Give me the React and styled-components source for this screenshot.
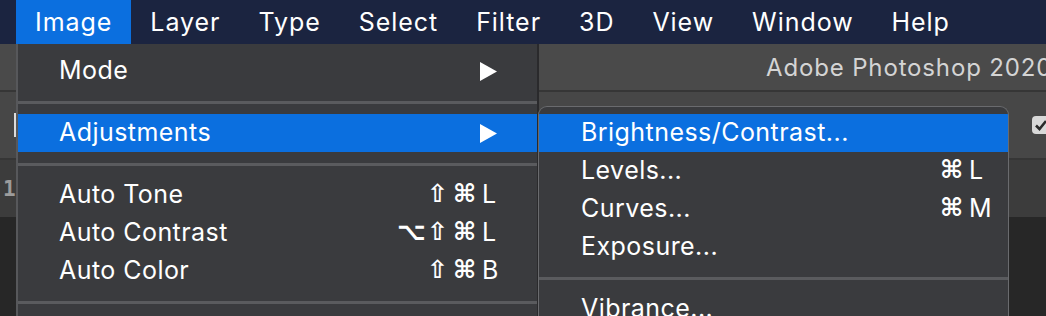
import * as React from 'react';
import styled, { createGlobalStyle } from 'styled-components';

const GlobalStyle = createGlobalStyle`
  html, body {
    margin: 0;
    padding: 0;
    background: #262626;
  }
  body {
    font-family: Inter, "DejaVu Sans", sans-serif;
    -webkit-font-smoothing: antialiased;
  }
`;

const Screen = styled.div`
  position: relative;
  width: 1046px;
  height: 316px;
  overflow: hidden;
  display: flex;
  flex-direction: column;
  background: #262626;
`;

const MenuBar = styled.nav`
  height: 44px;
  flex-shrink: 0;
  display: flex;
  align-items: stretch;
  padding-left: 16px;
  background: #1b2440;
`;

const MenuTitle = styled.div`
  display: flex;
  align-items: center;
  padding: 0 19px;
  font-size: 25px;
  letter-spacing: 0.95px;
  color: #ffffff;
  background: ${(p) => (p.$open ? '#0b6fdf' : 'transparent')};
`;

const TitleBar = styled.div`
  height: 46px;
  flex-shrink: 0;
  display: flex;
  align-items: center;
  padding-left: 766px;
  background: #4a4a4a;
  border-bottom: 2px solid #363636;
  color: #d4d4d4;
  font-size: 24px;
  letter-spacing: 0.85px;
  white-space: nowrap;
`;

const OptionsBar = styled.div`
  height: 66px;
  flex-shrink: 0;
  display: flex;
  align-items: center;
  justify-content: space-between;
  padding-left: 14px;
  background: #474747;
  border-bottom: 2px solid #363636;
`;

const Grip = styled.div`
  width: 2px;
  height: 24px;
  background: #dcdcdc;
`;

const Checkbox = styled.div`
  width: 18px;
  height: 18px;
  margin-right: -4px;
  border-radius: 4px;
  background: #d9d9d9;
  display: flex;
  align-items: center;
  justify-content: center;
`;

const InfoBar = styled.div`
  height: 57px;
  flex-shrink: 0;
  display: flex;
  align-items: center;
  padding-left: 3px;
  background: #3c3c3c;
  color: #9c9c9c;
  font-family: "DejaVu Sans Mono", monospace;
  font-weight: bold;
  font-size: 21px;
`;

const Canvas = styled.div`
  flex: 1;
  background: #272727;
`;

const Menu = styled.div`
  position: absolute;
  top: ${(p) => p.$top}px;
  left: ${(p) => p.$left}px;
  width: ${(p) => p.$width}px;
  bottom: -20px;
  padding-top: ${(p) => p.$padTop}px;
  box-sizing: border-box;
  background: #3a3b3e;
  border-left: ${(p) => (p.$sub ? '1px solid #6a6b6e' : '2px solid #57585b')};
  border-right: ${(p) => (p.$sub ? '1px solid #6a6b6e' : '2px solid #2a2a2c')};
  border-top: ${(p) => (p.$sub ? '1px solid #6a6b6e' : 'none')};
  border-radius: ${(p) => (p.$sub ? '9px 9px 0 0' : '0')};
  overflow: hidden;
`;

const Row = styled.div`
  height: 38px;
  display: flex;
  align-items: center;
  justify-content: space-between;
  padding: 0 ${(p) => p.$padRight}px 0 ${(p) => p.$padLeft}px;
  background: ${(p) => (p.$active ? '#0b6fdf' : 'transparent')};
  color: #ffffff;
  white-space: nowrap;
`;

const Label = styled.span`
  font-size: 25px;
  letter-spacing: 0.45px;
  margin-bottom: 3px;
`;

const Separator = styled.div`
  height: 24px;
  display: flex;
  align-items: center;
  &::after {
    content: '';
    flex: 1;
    height: 3px;
    background: #5a5b5e;
  }
`;

const Shortcut = styled.div`
  display: flex;
  align-items: center;
  margin-bottom: 3px;
`;

const SymbolKey = styled.span`
  width: 27px;
  text-align: center;
  font-family: "DejaVu Sans", sans-serif;
  font-size: 25px;
  font-weight: bold;
`;

const LetterKey = styled.span`
  width: 22px;
  margin-left: 4px;
  font-size: 25px;
`;

const Arrow = () => (
  <svg width="17" height="19" viewBox="0 0 17 19">
    <polygon points="0,0 17,9.5 0,19" fill="#ffffff" />
  </svg>
);

const Check = () => (
  <svg width="14" height="14" viewBox="0 0 14 14">
    <path d="M2 7.5 L5.5 11 L12 3" stroke="#2a2a2a" strokeWidth="2.6" fill="none" />
  </svg>
);

const Keys = ({ keys }) => (
  <Shortcut>
    {keys.map((k, i) =>
      '⇧⌘⌥'.includes(k) ? <SymbolKey key={i}>{k}</SymbolKey> : <LetterKey key={i}>{k}</LetterKey>
    )}
  </Shortcut>
);

const titles = ['Image', 'Layer', 'Type', 'Select', 'Filter', '3D', 'View', 'Window', 'Help'];

const imageMenu = [
  { label: 'Mode', sub: true },
  { sep: true },
  { label: 'Adjustments', sub: true, active: true },
  { sep: true },
  { label: 'Auto Tone', keys: ['⇧', '⌘', 'L'] },
  { label: 'Auto Contrast', keys: ['⌥', '⇧', '⌘', 'L'] },
  { label: 'Auto Color', keys: ['⇧', '⌘', 'B'] },
  { sep: true },
];

const adjustMenu = [
  { label: 'Brightness/Contrast...', active: true },
  { label: 'Levels...', keys: ['⌘', 'L'] },
  { label: 'Curves...', keys: ['⌘', 'M'] },
  { label: 'Exposure...' },
  { sep: true },
  { label: 'Vibrance...' },
];

const MenuItems = ({ items, padLeft, padRight, arrowPad }) =>
  items.map((item, i) =>
    item.sep ? (
      <Separator key={i} />
    ) : (
      <Row
        key={i}
        $active={item.active}
        $padLeft={padLeft}
        $padRight={item.sub ? arrowPad : padRight}
      >
        <Label>{item.label}</Label>
        {item.sub ? <Arrow /> : item.keys ? <Keys keys={item.keys} /> : null}
      </Row>
    )
  );

export default function App() {
  return (
    <Screen>
      <GlobalStyle />
      <MenuBar>
        {titles.map((t, i) => (
          <MenuTitle key={t} $open={i === 0}>
            {t}
          </MenuTitle>
        ))}
      </MenuBar>
      <TitleBar>Adobe Photoshop 2020</TitleBar>
      <OptionsBar>
        <Grip />
        <Checkbox>
          <Check />
        </Checkbox>
      </OptionsBar>
      <InfoBar>1,</InfoBar>
      <Canvas />

      <Menu $top={44} $left={16} $width={523} $padTop={8}>
        <MenuItems items={imageMenu} padLeft={41} padRight={33} arrowPad={40} />
      </Menu>
      <Menu $sub $top={106} $left={538} $width={471} $padTop={7}>
        <MenuItems items={adjustMenu} padLeft={42} padRight={17} arrowPad={17} />
      </Menu>
    </Screen>
  );
}
